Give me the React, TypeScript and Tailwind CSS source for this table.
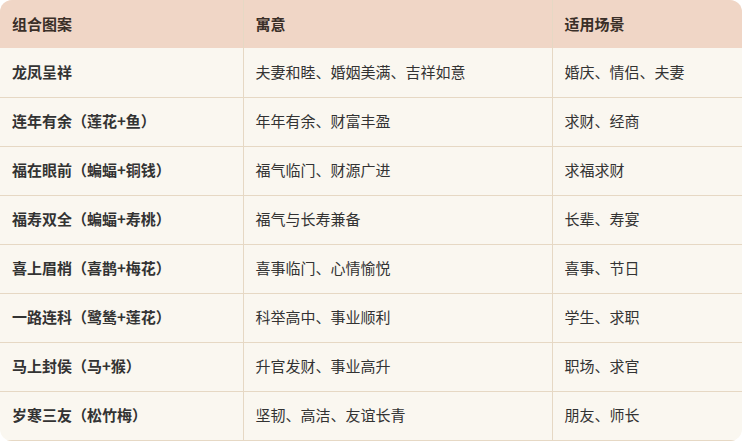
import React from "react";

const rows = [
  { name: "龙凤呈祥", meaning: "夫妻和睦、婚姻美满、吉祥如意", scene: "婚庆、情侣、夫妻" },
  { name: "连年有余（莲花+鱼）", meaning: "年年有余、财富丰盈", scene: "求财、经商" },
  { name: "福在眼前（蝙蝠+铜钱）", meaning: "福气临门、财源广进", scene: "求福求财" },
  { name: "福寿双全（蝙蝠+寿桃）", meaning: "福气与长寿兼备", scene: "长辈、寿宴" },
  { name: "喜上眉梢（喜鹊+梅花）", meaning: "喜事临门、心情愉悦", scene: "喜事、节日" },
  { name: "一路连科（鹭鸶+莲花）", meaning: "科举高中、事业顺利", scene: "学生、求职" },
  { name: "马上封侯（马+猴）", meaning: "升官发财、事业高升", scene: "职场、求官" },
  { name: "岁寒三友（松竹梅）", meaning: "坚韧、高洁、友谊长青", scene: "朋友、师长" },
];

export default function App() {
  return (
    <div
      className="w-[742px] bg-white"
      style={{ fontFamily: '"Noto Sans CJK SC", "Noto Sans", sans-serif' }}
    >
      <div className="overflow-hidden rounded-xl bg-[#faf7f0]">
        <table className="w-full border-collapse text-[15px] text-[#333333]">
          <thead>
            <tr className="h-[48px] bg-[#f0d6c6] text-left">
              <th className="w-[243px] border-r border-[#e6d8c4] px-3 font-bold text-[#3a2f28]">组合图案</th>
              <th className="w-[309px] border-r border-[#e6d8c4] px-3 font-bold text-[#3a2f28]">寓意</th>
              <th className="px-3 font-bold text-[#3a2f28]">适用场景</th>
            </tr>
          </thead>
          <tbody>
            {rows.map((r) => (
              <tr key={r.name} className="h-[49px] border-b border-[#e6d8c4]">
                <td className="border-r border-[#e6d8c4] px-3 font-bold">{r.name}</td>
                <td className="border-r border-[#e6d8c4] px-3">{r.meaning}</td>
                <td className="px-3">{r.scene}</td>
              </tr>
            ))}
          </tbody>
        </table>
      </div>
    </div>
  );
}
